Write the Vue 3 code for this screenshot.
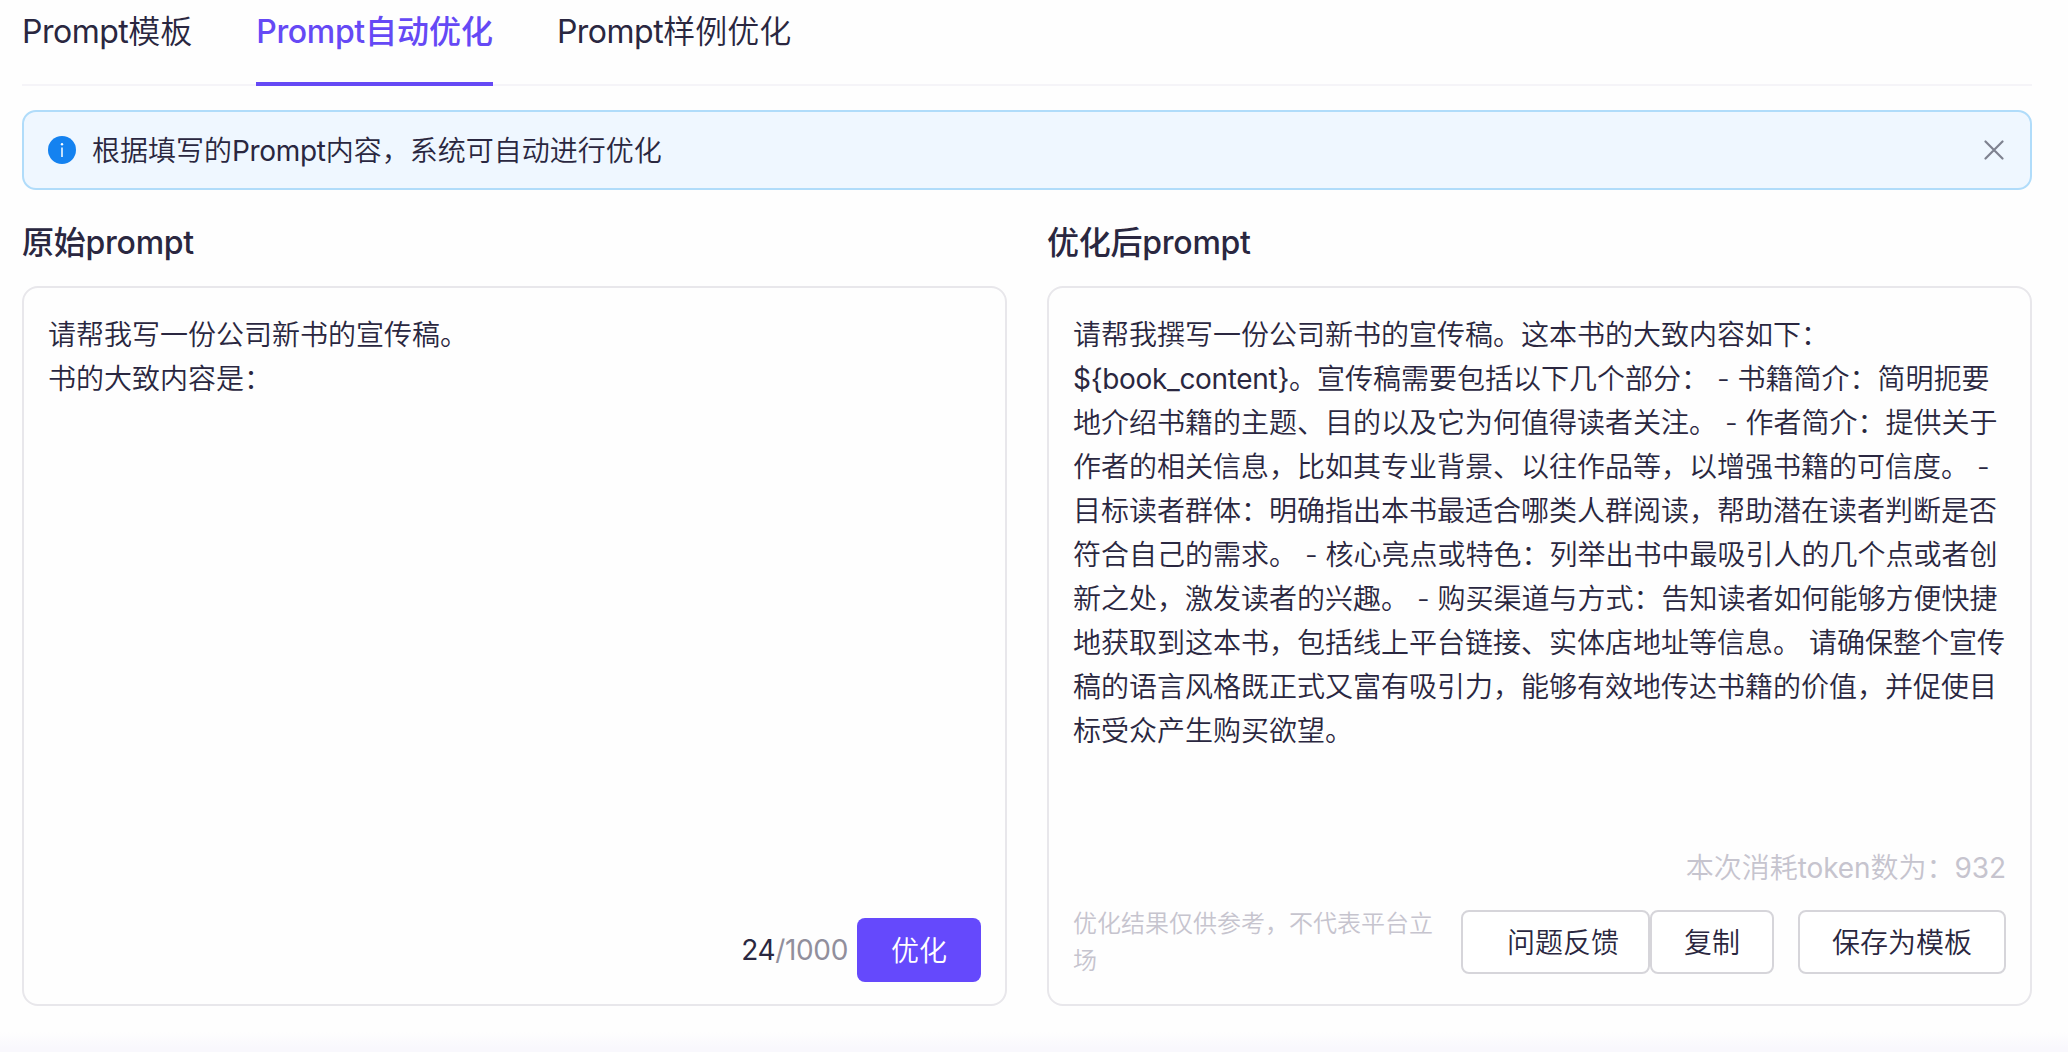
<template>
  <div class="prompt-page">
    <nav class="tabs">
      <div
        v-for="tab in tabs"
        :key="tab"
        class="tab"
        :class="{ active: tab === activeTab }"
        @click="activeTab = tab"
      >
        <span class="latin">Prompt</span>{{ tab }}
      </div>
    </nav>

    <div v-if="showAlert" class="alert">
      <svg class="alert-icon" viewBox="0 0 28 28">
        <circle cx="14" cy="14" r="14" fill="#1482f0" />
        <circle cx="14" cy="8.3" r="1.2" fill="#fff" />
        <path d="M14 11.5v9.5" stroke="#fff" stroke-width="1.5" />
      </svg>
      <span class="alert-text">根据填写的<span class="latin">Prompt</span>内容，系统可自动进行优化</span>
      <svg class="alert-close" viewBox="0 0 20 20" @click="showAlert = false">
        <path d="M1.5 1.5l17 17M18.5 1.5l-17 17" />
      </svg>
    </div>

    <div class="columns">
      <!-- Original prompt -->
      <section class="column">
        <h2>原始prompt</h2>
        <div class="panel">
          <div class="content">{{ original }}</div>
          <div class="footer source-footer">
            <span class="counter">24<span class="limit">/1000</span></span>
            <button class="btn primary">优化</button>
          </div>
        </div>
      </section>

      <!-- Optimized prompt -->
      <section class="column">
        <h2>优化后prompt</h2>
        <div class="panel">
          <div class="content">
            <div v-for="(line, i) in optimized" :key="i">
              <span v-if="line.variable" class="latin">{{ line.variable }}</span>{{ line.text }}
            </div>
          </div>
          <div class="tokens">本次消耗<span class="latin">token</span>数为：<span class="latin">932</span></div>
          <div class="footer result-footer">
            <p class="disclaimer">优化结果仅供参考，不代表平台立场</p>
            <button class="btn feedback">问题反馈</button>
            <button class="btn copy">复制</button>
            <button class="btn save">保存为模板</button>
          </div>
        </div>
      </section>
    </div>
  </div>
</template>

<script setup>
import { ref } from 'vue'

const tabs = ['模板', '自动优化', '样例优化']
const activeTab = ref('自动优化')
const showAlert = ref(true)

const original = '请帮我写一份公司新书的宣传稿。\n书的大致内容是：'

const optimized = [
  { text: '请帮我撰写一份公司新书的宣传稿。这本书的大致内容如下：' },
  { variable: '${book_content}', text: '。宣传稿需要包括以下几个部分： - 书籍简介：简明扼要' },
  { text: '地介绍书籍的主题、目的以及它为何值得读者关注。 - 作者简介：提供关于' },
  { text: '作者的相关信息，比如其专业背景、以往作品等，以增强书籍的可信度。 -' },
  { text: '目标读者群体：明确指出本书最适合哪类人群阅读，帮助潜在读者判断是否' },
  { text: '符合自己的需求。 - 核心亮点或特色：列举出书中最吸引人的几个点或者创' },
  { text: '新之处，激发读者的兴趣。 - 购买渠道与方式：告知读者如何能够方便快捷' },
  { text: '地获取到这本书，包括线上平台链接、实体店地址等信息。 请确保整个宣传' },
  { text: '稿的语言风格既正式又富有吸引力，能够有效地传达书籍的价值，并促使目' },
  { text: '标受众产生购买欲望。' }
]
</script>

<style>
body {
  margin: 0;
  background: #fefefe;
}
</style>

<style scoped>
.prompt-page {
  box-sizing: border-box;
  height: 1052px;
  padding: 0 36px 0 22px;
  overflow: hidden;
  display: flex;
  flex-direction: column;
  font-family: Inter, 'Noto Sans CJK SC', sans-serif;
  font-size: 28px;
  font-weight: 350;
  color: #2a2740;
  background: linear-gradient(to bottom, #fefefe 1032px, #f9f8fd 1048px);
}

.latin {
  font-weight: 400;
  letter-spacing: -0.33px;
}

.tabs {
  display: flex;
  gap: 64px;
  height: 84px;
  border-bottom: 2px solid #f5f4f8;
}

.tab {
  box-sizing: border-box;
  height: 86px;
  font-size: 32px;
  line-height: 64px;
  white-space: nowrap;
  cursor: pointer;
}

.tab .latin {
  letter-spacing: -0.5px;
}

.tab.active {
  color: #6549f5;
  font-weight: 500;
  border-bottom: 4px solid #6549f5;
}

.tab.active .latin {
  font-weight: 500;
  letter-spacing: -0.35px;
}

.alert {
  box-sizing: border-box;
  height: 80px;
  margin-top: 24px;
  padding: 0 26px 0 24px;
  display: flex;
  align-items: center;
  border: 2px solid #b0dcfa;
  border-radius: 14px;
  background: #eff7ff;
}

.alert-icon {
  width: 28px;
  height: 28px;
  margin-right: 16px;
}

.alert-text {
  flex: 1;
  padding-bottom: 2px;
}

.alert-close {
  width: 20px;
  height: 20px;
  fill: none;
  stroke: #7e8290;
  stroke-width: 2.2;
  stroke-linecap: round;
  cursor: pointer;
}

.columns {
  display: grid;
  grid-template-columns: 1fr 1fr;
  gap: 40px;
}

h2 {
  margin: 29px 0 19px;
  font-size: 32px;
  line-height: 48px;
  font-weight: 500;
  letter-spacing: -0.25px;
}

.panel {
  box-sizing: border-box;
  height: 720px;
  padding: 25px 24px 22px;
  display: flex;
  flex-direction: column;
  border: 2px solid #e8e7eb;
  border-radius: 16px;
}

.content {
  flex: 1;
  line-height: 44px;
  white-space: pre-wrap;
}

.content > div {
  white-space: nowrap;
}

.footer {
  display: flex;
}

.source-footer {
  justify-content: flex-end;
  align-items: center;
}

.counter {
  margin-right: 9px;
  font-weight: 400;
  letter-spacing: -0.35px;
}

.limit {
  color: #918f9c;
}

.btn {
  box-sizing: border-box;
  flex: none;
  height: 64px;
  padding: 0 32px 2px;
  font: inherit;
  color: inherit;
  background: #fff;
  border: 2px solid #d6d5da;
  border-radius: 8px;
}

.btn.primary {
  padding: 0 34px 2px;
  color: #fff;
  border: none;
  background: #6549fc;
}

.tokens {
  margin-bottom: 20px;
  line-height: 44px;
  text-align: right;
  color: #c6c4ce;
}

.tokens .latin {
  letter-spacing: -0.1px;
}

.result-footer {
  align-items: flex-start;
  height: 72px;
}

.disclaimer {
  width: 364px;
  margin: -5px auto 0 0;
  font-size: 24px;
  line-height: 37px;
  color: #c6c4ce;
}

.btn.feedback {
  padding: 0 29px 2px 44px;
}

.btn.copy {
  margin-right: 24px;
}
</style>
